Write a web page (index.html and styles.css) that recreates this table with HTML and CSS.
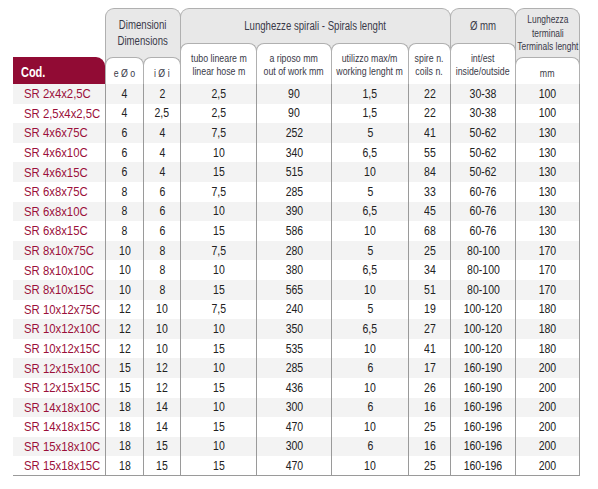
FILE: index.html
```html
<!DOCTYPE html>
<html lang="it">
<head>
<meta charset="utf-8">
<title>Spirali</title>
<link rel="stylesheet" href="styles.css">
</head>
<body>
<div class="tbl">
  <div class="head">
    <div class="cod"><span>Cod.</span></div>
    <div class="grp g-dim">
      <div class="gt"><span>Dimensioni<br>Dimensions</span></div>
      <div class="subs s27">
        <div class="sub w39 sp"><span>e Ø o</span></div>
        <div class="sub w38 sp"><span>i Ø i</span></div>
      </div>
    </div>
    <div class="grp g-lun">
      <div class="gt"><span>Lunghezze spirali - Spirals lenght</span></div>
      <div class="subs s41">
        <div class="sub w77"><span>tubo lineare m<br>linear hose m</span></div>
        <div class="sub w76"><span>a riposo mm<br>out of work mm</span></div>
        <div class="sub w78"><span>utilizzo max/m<br>working lenght m</span></div>
        <div class="sub w43"><span>spire n.<br>coils n.</span></div>
      </div>
    </div>
    <div class="grp g-dia">
      <div class="gt"><span>Ø mm</span></div>
      <div class="subs s41">
        <div class="sub w66"><span>int/est<br>inside/outside</span></div>
      </div>
    </div>
    <div class="grp g-ter">
      <div class="gt gt3"><span>Lunghezza<br>terminali<br>Terminals lenght</span></div>
      <div class="subs s27">
        <div class="sub w65 sp"><span>mm</span></div>
      </div>
    </div>
  </div>
  <div class="body">
    <div class="r"><div class="c"><span>SR 2x4x2,5C</span></div><div><span>4</span></div><div><span>2</span></div><div><span>2,5</span></div><div><span>90</span></div><div><span>1,5</span></div><div><span>22</span></div><div><span>30-38</span></div><div class="l"><span>100</span></div></div>
    <div class="r"><div class="c"><span>SR 2,5x4x2,5C</span></div><div><span>4</span></div><div><span>2,5</span></div><div><span>2,5</span></div><div><span>90</span></div><div><span>1,5</span></div><div><span>22</span></div><div><span>30-38</span></div><div class="l"><span>100</span></div></div>
    <div class="r"><div class="c"><span>SR 4x6x75C</span></div><div><span>6</span></div><div><span>4</span></div><div><span>7,5</span></div><div><span>252</span></div><div><span>5</span></div><div><span>41</span></div><div><span>50-62</span></div><div class="l"><span>130</span></div></div>
    <div class="r"><div class="c"><span>SR 4x6x10C</span></div><div><span>6</span></div><div><span>4</span></div><div><span>10</span></div><div><span>340</span></div><div><span>6,5</span></div><div><span>55</span></div><div><span>50-62</span></div><div class="l"><span>130</span></div></div>
    <div class="r"><div class="c"><span>SR 4x6x15C</span></div><div><span>6</span></div><div><span>4</span></div><div><span>15</span></div><div><span>515</span></div><div><span>10</span></div><div><span>84</span></div><div><span>50-62</span></div><div class="l"><span>130</span></div></div>
    <div class="r"><div class="c"><span>SR 6x8x75C</span></div><div><span>8</span></div><div><span>6</span></div><div><span>7,5</span></div><div><span>285</span></div><div><span>5</span></div><div><span>33</span></div><div><span>60-76</span></div><div class="l"><span>130</span></div></div>
    <div class="r"><div class="c"><span>SR 6x8x10C</span></div><div><span>8</span></div><div><span>6</span></div><div><span>10</span></div><div><span>390</span></div><div><span>6,5</span></div><div><span>45</span></div><div><span>60-76</span></div><div class="l"><span>130</span></div></div>
    <div class="r"><div class="c"><span>SR 6x8x15C</span></div><div><span>8</span></div><div><span>6</span></div><div><span>15</span></div><div><span>586</span></div><div><span>10</span></div><div><span>68</span></div><div><span>60-76</span></div><div class="l"><span>130</span></div></div>
    <div class="r"><div class="c"><span>SR 8x10x75C</span></div><div><span>10</span></div><div><span>8</span></div><div><span>7,5</span></div><div><span>280</span></div><div><span>5</span></div><div><span>25</span></div><div><span>80-100</span></div><div class="l"><span>170</span></div></div>
    <div class="r"><div class="c"><span>SR 8x10x10C</span></div><div><span>10</span></div><div><span>8</span></div><div><span>10</span></div><div><span>380</span></div><div><span>6,5</span></div><div><span>34</span></div><div><span>80-100</span></div><div class="l"><span>170</span></div></div>
    <div class="r"><div class="c"><span>SR 8x10x15C</span></div><div><span>10</span></div><div><span>8</span></div><div><span>15</span></div><div><span>565</span></div><div><span>10</span></div><div><span>51</span></div><div><span>80-100</span></div><div class="l"><span>170</span></div></div>
    <div class="r"><div class="c"><span>SR 10x12x75C</span></div><div><span>12</span></div><div><span>10</span></div><div><span>7,5</span></div><div><span>240</span></div><div><span>5</span></div><div><span>19</span></div><div><span>100-120</span></div><div class="l"><span>180</span></div></div>
    <div class="r"><div class="c"><span>SR 10x12x10C</span></div><div><span>12</span></div><div><span>10</span></div><div><span>10</span></div><div><span>350</span></div><div><span>6,5</span></div><div><span>27</span></div><div><span>100-120</span></div><div class="l"><span>180</span></div></div>
    <div class="r"><div class="c"><span>SR 10x12x15C</span></div><div><span>12</span></div><div><span>10</span></div><div><span>15</span></div><div><span>535</span></div><div><span>10</span></div><div><span>41</span></div><div><span>100-120</span></div><div class="l"><span>180</span></div></div>
    <div class="r"><div class="c"><span>SR 12x15x10C</span></div><div><span>15</span></div><div><span>12</span></div><div><span>10</span></div><div><span>285</span></div><div><span>6</span></div><div><span>17</span></div><div><span>160-190</span></div><div class="l"><span>200</span></div></div>
    <div class="r"><div class="c"><span>SR 12x15x15C</span></div><div><span>15</span></div><div><span>12</span></div><div><span>15</span></div><div><span>436</span></div><div><span>10</span></div><div><span>26</span></div><div><span>160-190</span></div><div class="l"><span>200</span></div></div>
    <div class="r"><div class="c"><span>SR 14x18x10C</span></div><div><span>18</span></div><div><span>14</span></div><div><span>10</span></div><div><span>300</span></div><div><span>6</span></div><div><span>16</span></div><div><span>160-196</span></div><div class="l"><span>200</span></div></div>
    <div class="r"><div class="c"><span>SR 14x18x15C</span></div><div><span>18</span></div><div><span>14</span></div><div><span>15</span></div><div><span>470</span></div><div><span>10</span></div><div><span>25</span></div><div><span>160-196</span></div><div class="l"><span>200</span></div></div>
    <div class="r"><div class="c"><span>SR 15x18x10C</span></div><div><span>18</span></div><div><span>15</span></div><div><span>10</span></div><div><span>300</span></div><div><span>6</span></div><div><span>16</span></div><div><span>160-196</span></div><div class="l"><span>200</span></div></div>
    <div class="r"><div class="c"><span>SR 15x18x15C</span></div><div><span>18</span></div><div><span>15</span></div><div><span>15</span></div><div><span>470</span></div><div><span>10</span></div><div><span>25</span></div><div><span>160-196</span></div><div class="l"><span>200</span></div></div>
  </div>
</div>
</body>
</html>
```

FILE: styles.css
```css
html, body {
  margin: 0;
  padding: 0;
  background: #ffffff;
}

body {
  font-family: "Liberation Sans", Arial, sans-serif;
  color: #222222;
}

span {
  display: inline-block;
  white-space: nowrap;
}

.tbl {
  padding: 8px 0 0 13px;
  width: 566px;
}

.head {
  display: grid;
  grid-template-columns: 92px 38px 37px 76px 75px 77px 42px 65px 64px;
  grid-template-rows: 35px 14px 27px;
  height: 76px;
}

.cod {
  grid-column: 1;
  grid-row: 3;
  background: #910b34;
  color: #ffffff;
  border-radius: 0 9px 0 0;
  font-size: 15px;
  font-weight: bold;
  display: flex;
  align-items: center;
  padding-left: 8px;
  padding-top: 1px;
}

.cod span {
  transform: scaleX(0.73);
  transform-origin: left center;
}

.grp {
  grid-row: 1 / 4;
  margin-right: -1px;
  border: 1px solid #b0b0b0;
  border-bottom: none;
  border-radius: 9px 9px 0 0;
  background: #e8e8e8;
  display: flex;
  flex-direction: column;
  color: #3a3a48;
}

.g-dim { grid-column: 2 / 4; }
.g-lun { grid-column: 4 / 8; }
.g-dia { grid-column: 8 / 9; }
.g-ter { grid-column: 9 / 10; }

.gt {
  flex: 1;
  display: flex;
  align-items: center;
  justify-content: center;
  text-align: center;
  font-size: 12.5px;
  line-height: 16px;
}

.gt span {
  transform: scaleX(0.77);
}

.gt3 {
  font-size: 11.5px;
  line-height: 13.5px;
  padding-top: 1px;
}

.gt3 span {
  transform: scaleX(0.73);
}

.subs {
  display: flex;
  margin: 0 -1px;
}

.s27 { height: 27px; }
.s41 { height: 41px; }

.sub {
  box-sizing: border-box;
  height: 100%;
  border: 1px solid #b0b0b0;
  border-bottom: none;
  border-radius: 8px 8px 0 0;
  background: #ffffff;
  display: flex;
  align-items: center;
  justify-content: center;
  text-align: center;
  font-size: 11px;
  line-height: 13px;
  flex: none;
  padding-top: 1px;
}

.sub span {
  transform: scaleX(0.8);
}

.sub + .sub { margin-left: -1px; }

.sp {
  padding-top: 4px;
}

.w38 { width: 38px; }
.w39 { width: 39px; }
.w43 { width: 43px; }
.w65 { width: 65px; }
.w66 { width: 66px; }
.w76 { width: 76px; }
.w77 { width: 77px; }
.w78 { width: 78px; }

.r {
  display: grid;
  grid-template-columns: 92px 38px 37px 76px 75px 77px 42px 65px 64px;
  height: 19.6px;
  font-size: 12.5px;
}

.r:nth-child(odd) {
  background: #f3f3f3;
}

.r > div {
  display: flex;
  align-items: center;
  justify-content: center;
  border-left: 1px solid #9a9a9a;
}

.r > div > span {
  transform: scaleX(0.84);
}

.r > .c {
  justify-content: flex-start;
  border-left: none;
  padding-left: 11px;
  color: #9b0f3a;
  font-size: 13.5px;
}

.r > .c > span {
  transform-origin: left center;
}

.r > .l {
  border-right: 1px solid #9a9a9a;
  margin-right: -1px;
}

.r:last-child > div {
  border-bottom: 1px solid #9a9a9a;
}
```
